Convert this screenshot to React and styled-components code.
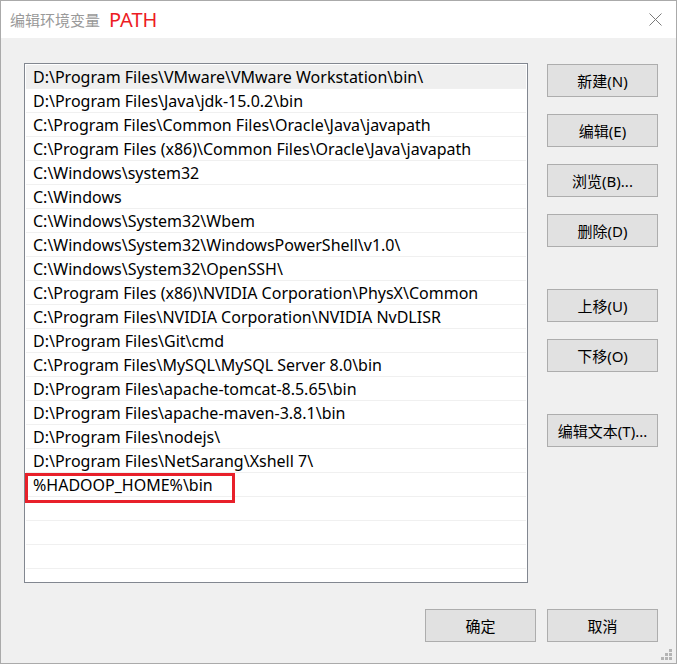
import React from 'react';
import styled, { createGlobalStyle } from 'styled-components';

const GlobalStyle = createGlobalStyle`
  html, body {
    margin: 0;
    padding: 0;
    background: #f0f0f0;
  }
  body {
    font-family: "Noto Sans", "Noto Sans CJK SC", sans-serif;
  }
`;

const paths = [
  'D:\\Program Files\\VMware\\VMware Workstation\\bin\\',
  'D:\\Program Files\\Java\\jdk-15.0.2\\bin',
  'C:\\Program Files\\Common Files\\Oracle\\Java\\javapath',
  'C:\\Program Files (x86)\\Common Files\\Oracle\\Java\\javapath',
  'C:\\Windows\\system32',
  'C:\\Windows',
  'C:\\Windows\\System32\\Wbem',
  'C:\\Windows\\System32\\WindowsPowerShell\\v1.0\\',
  'C:\\Windows\\System32\\OpenSSH\\',
  'C:\\Program Files (x86)\\NVIDIA Corporation\\PhysX\\Common',
  'C:\\Program Files\\NVIDIA Corporation\\NVIDIA NvDLISR',
  'D:\\Program Files\\Git\\cmd',
  'C:\\Program Files\\MySQL\\MySQL Server 8.0\\bin',
  'D:\\Program Files\\apache-tomcat-8.5.65\\bin',
  'D:\\Program Files\\apache-maven-3.8.1\\bin',
  'D:\\Program Files\\nodejs\\',
  'D:\\Program Files\\NetSarang\\Xshell 7\\',
  '%HADOOP_HOME%\\bin',
  '',
  '',
  '',
];

const sideButtons = [
  { label: '新建(N)' },
  { label: '编辑(E)' },
  { label: '浏览(B)...' },
  { label: '删除(D)' },
  { label: '上移(U)', group: true },
  { label: '下移(O)' },
  { label: '编辑文本(T)...', group: true },
];

const Window = styled.div`
  position: relative;
  box-sizing: border-box;
  width: 677px;
  height: 664px;
  border: 1px solid #aaaaaa;
  background: #f0f0f0;
  display: flex;
  flex-direction: column;
`;

const TitleBar = styled.div`
  height: 37px;
  background: #ffffff;
  display: flex;
  align-items: center;
  padding: 0 14px 0 9px;
`;

const TitleText = styled.span`
  font-size: 15px;
  color: #999999;
`;

const TitleVar = styled.span`
  font-size: 20px;
  color: #ed1c24;
  margin-left: 9px;
`;

const CloseButton = styled.div`
  margin-left: auto;
  width: 13px;
  height: 13px;
  display: flex;
`;

const Body = styled.div`
  flex: 1;
  display: flex;
  flex-direction: column;
  padding: 25px 18px 0 23px;
`;

const MainRow = styled.div`
  display: flex;
  gap: 19px;
`;

const List = styled.div`
  box-sizing: border-box;
  width: 504px;
  height: 520px;
  border: 1px solid #828790;
  background: #ffffff;
  padding: 1px;
  overflow: hidden;
`;

const Row = styled.div`
  position: relative;
  height: 23px;
  line-height: 25px;
  border-bottom: 1px solid #f0f0f0;
  padding-left: 7px;
  font-size: 16px;
  color: #000000;
  white-space: nowrap;
  background: ${(p) => (p.$selected ? '#efefef' : '#ffffff')};
`;

const Highlight = styled.div`
  position: absolute;
  z-index: 1;
  left: -1px;
  top: 0;
  width: 210px;
  height: 30px;
  box-sizing: border-box;
  border: 3px solid #e8202a;
  pointer-events: none;
`;

const ButtonColumn = styled.div`
  display: flex;
  flex-direction: column;
  padding-top: 1px;
`;

const Button = styled.button`
  box-sizing: border-box;
  width: 111px;
  height: 33px;
  margin: 0;
  margin-top: ${(p) => (p.$first ? '0' : p.$group ? '42px' : '17px')};
  padding: 0 0 1px;
  border: 1px solid #adadad;
  background: #e1e1e1;
  font-family: "Noto Sans", "Noto Sans CJK SC", sans-serif;
  font-size: 15px;
  color: #000000;
`;

const Footer = styled.div`
  display: flex;
  justify-content: flex-end;
  gap: 11px;
  margin-top: 26px;
`;

const Grip = styled.svg`
  position: absolute;
  right: 3px;
  bottom: 2px;
`;

export default function App() {
  return (
    <>
      <GlobalStyle />
      <Window>
        <TitleBar>
          <TitleText>编辑环境变量</TitleText>
          <TitleVar>PATH</TitleVar>
          <CloseButton>
            <svg width="13" height="13" viewBox="0 0 13 13">
              <path d="M0.5 0.5 L12.5 12.5 M12.5 0.5 L0.5 12.5" stroke="#7a7a7a" strokeWidth="1" fill="none" />
            </svg>
          </CloseButton>
        </TitleBar>
        <Body>
          <MainRow>
            <List>
              {paths.map((p, i) => (
                <Row key={i} $selected={i === 0}>
                  {p}
                  {i === 17 && <Highlight />}
                </Row>
              ))}
            </List>
            <ButtonColumn>
              {sideButtons.map((b, i) => (
                <Button key={b.label} $first={i === 0} $group={b.group}>
                  {b.label}
                </Button>
              ))}
            </ButtonColumn>
          </MainRow>
          <Footer>
            <Button $first>确定</Button>
            <Button $first>取消</Button>
          </Footer>
        </Body>
        <Grip width="12" height="12" viewBox="0 0 12 12">
          <g fill="#b4b4b4">
            <rect x="8" y="0" width="3" height="3" />
            <rect x="4" y="4" width="3" height="3" />
            <rect x="8" y="4" width="3" height="3" />
            <rect x="0" y="8" width="3" height="3" />
            <rect x="4" y="8" width="3" height="3" />
            <rect x="8" y="8" width="3" height="3" />
          </g>
        </Grip>
      </Window>
    </>
  );
}
